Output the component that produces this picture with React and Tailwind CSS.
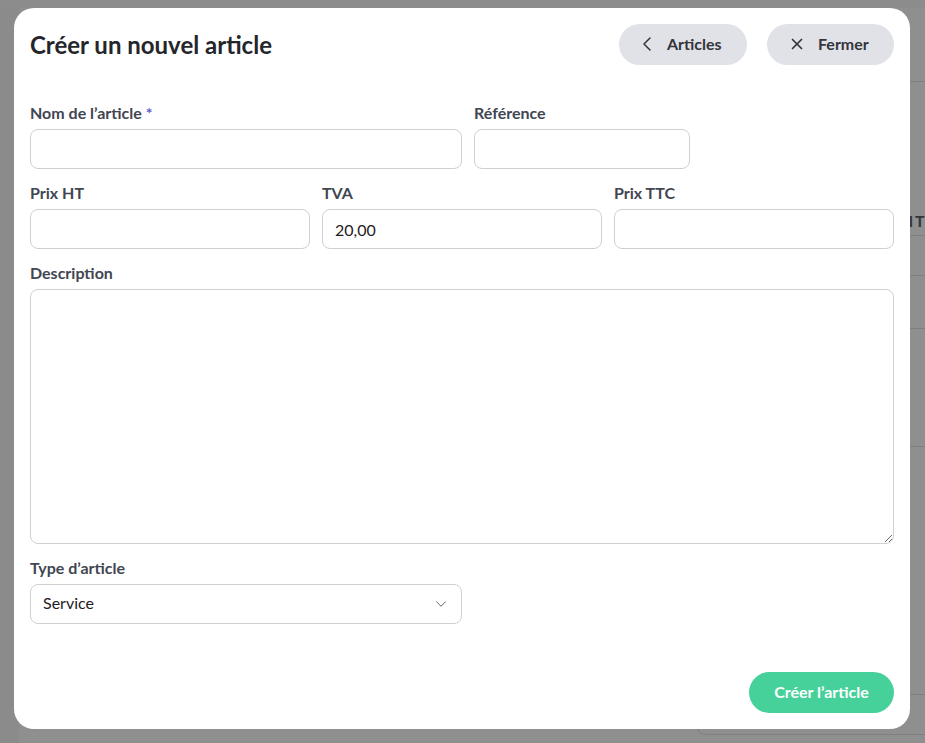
import { ChevronLeft, ChevronDown, X } from "lucide-react";

const labelCls = "block h-5 text-base leading-5 font-bold text-[#414652]";
const inputCls = "block w-full h-10 rounded-lg border border-[#d0d0d3] bg-white px-3 text-base text-[#1f2024] outline-none";

function Field({ label, required, className, children }) {
  return (
    <div className={className}>
      <label className={`${labelCls} mb-[6px]`}>
        {label}
        {required && <span className="text-[#5b5bd6]"> *</span>}
      </label>
      {children}
    </div>
  );
}

export default function App() {
  return (
    <div className="relative h-[743px] w-[925px] overflow-hidden bg-[#8f8f8f] font-['Lato','Liberation_Sans',sans-serif]">
      <div className="absolute inset-y-0 left-0 w-[19px] bg-[#8b8b8b]" />
      <div className="absolute inset-x-0 top-0 h-2 bg-[#8c8c8c]" />
      <div className="absolute right-0 top-[81px] h-px w-[15px] bg-[#7f7f7f]" />
      <div className="absolute right-0 top-[235px] h-px w-[15px] bg-[#7f7f7f]" />
      <div className="absolute right-0 top-[275px] h-px w-[15px] bg-[#7f7f7f]" />
      <div className="absolute right-0 top-[328px] h-px w-[15px] bg-[#7f7f7f]" />
      <div className="absolute right-0 top-[446px] h-px w-[15px] bg-[#7f7f7f]" />
      <span className="absolute left-[909px] top-[211px] text-base font-bold leading-5 text-[#33353b]">l</span>
      <span className="absolute left-[915px] top-[211px] text-base font-bold leading-5 text-[#33353b]">T</span>
      <div className="absolute left-[697px] top-[694px] h-[41px] w-[260px] rounded-lg border border-[#7f7f7f]" />
      <div className="absolute left-[14px] top-2 flex h-[721px] w-[896px] flex-col rounded-[20px] bg-white p-4">
        <div className="flex h-[41px] items-center justify-between">
          <h1 className="text-2xl font-bold text-[#24262b]">Créer un nouvel article</h1>
          <div className="flex gap-5">
            <button className="flex h-[41px] w-[128px] items-center gap-2 rounded-full bg-[#e1e2e8] pb-px pl-4 text-base font-bold text-[#33353b]">
              <ChevronLeft size={24} strokeWidth={1.5} />
              Articles
            </button>
            <button className="flex h-[41px] w-[127px] items-center gap-3 rounded-full bg-[#e1e2e8] pb-px pl-[21px] text-base font-bold text-[#33353b]">
              <X size={18} strokeWidth={2.25} />
              Fermer
            </button>
          </div>
        </div>

        <div className="mt-[38px] flex gap-3">
          <Field label="Nom de l’article" required className="w-[432px]">
            <input className={inputCls} />
          </Field>
          <Field label="Référence" className="w-[216px]">
            <input className={inputCls} />
          </Field>
        </div>

        <div className="mt-[14px] grid grid-cols-3 gap-3">
          <Field label="Prix HT"><input className={inputCls} /></Field>
          <Field label="TVA"><input className={inputCls} defaultValue="20,00" /></Field>
          <Field label="Prix TTC"><input className={inputCls} /></Field>
        </div>

        <Field label="Description" className="mt-[14px]">
          <textarea className="block h-[255px] w-full rounded-lg border border-[#d0d0d3] bg-white px-3 py-2 text-base outline-none" />
        </Field>

        <Field label="Type d’article" className="mt-[14px] w-[432px]">
          <div className="flex h-10 items-center justify-between rounded-lg border border-[#d0d0d3] bg-white pl-3 pr-[11px] text-base text-[#1f2024]">
            <span className="pb-[2px]">Service</span>
            <ChevronDown size={18} strokeWidth={1.25} className="text-[#55585f]" />
          </div>
        </Field>

        <div className="mt-auto flex justify-end">
          <button className="h-[41px] w-[145px] rounded-full bg-[#47d19a] pb-px text-base font-bold text-white">Créer l’article</button>
        </div>
      </div>
    </div>
  );
}
